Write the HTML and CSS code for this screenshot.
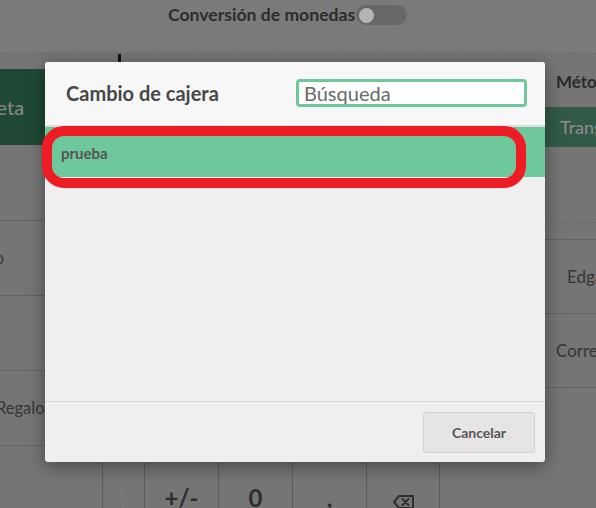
FILE: index.html
```html
<!DOCTYPE html>
<html lang="es">
<head>
<meta charset="utf-8">
<title>Cambio de cajera</title>
<link rel="stylesheet" href="styles.css">
</head>
<body>
<div class="app">
  <header class="topbar">
    <span class="conv">Conversión de monedas</span>
    <span class="toggle"><span class="knob"></span></span>
  </header>
  <main class="main">
    <aside class="methods">
      <div class="method selected"><span class="lbl lbl-tarjeta">Tarjeta</span></div>
      <div class="method"><span class="lbl lbl-banco">Banco</span></div>
      <div class="method"><span class="lbl lbl-efectivo">Efectivo</span></div>
      <div class="method"><span class="lbl lbl-cheque">Cheque</span></div>
      <div class="method"><span class="lbl lbl-regalo">Tarjeta Regalo</span></div>
    </aside>
    <section class="center">
      <div class="cursor"></div>
      <div class="spacer"></div>
      <div class="keypad">
        <div class="kp-edge"></div>
        <div class="kp-gap"></div>
        <div class="kp-cell">+/-</div>
        <div class="kp-cell">0</div>
        <div class="kp-cell">,</div>
        <div class="kp-cell kp-last">
          <svg class="bksp" width="21" height="14" viewBox="0 0 21 14" aria-hidden="true">
            <path d="M6 1 H20 V13 H6 L1 7 Z" fill="none" stroke="#2e2e2e" stroke-width="2" stroke-linejoin="round"/>
            <path d="M9.5 4 L15.5 10 M15.5 4 L9.5 10" stroke="#2e2e2e" stroke-width="2" stroke-linecap="round"/>
          </svg>
        </div>
      </div>
    </section>
    <aside class="side">
      <div class="side-title">Método</div>
      <div class="side-sel">Transferencia</div>
      <div class="side-gap"></div>
      <div class="side-gap2"></div>
      <div class="side-row side-row-a">Edgar</div>
      <div class="side-row side-row-b">Correo</div>
    </aside>
  </main>
</div>

<div class="modal">
  <div class="modal-head">
    <span class="modal-title">Cambio de cajera</span>
    <input class="search" type="text" placeholder="Búsqueda">
  </div>
  <div class="modal-body">
    <div class="cashier selected-row">prueba</div>
  </div>
  <div class="modal-foot">
    <button class="btn-cancel" type="button">Cancelar</button>
  </div>
</div>

<div class="annot"></div>
</body>
</html>
```

FILE: styles.css
```css
* { box-sizing: border-box; }

html, body {
  margin: 0;
  padding: 0;
}

body {
  width: 596px;
  height: 508px;
  overflow: hidden;
  position: relative;
  background: #757575;
  font-family: Lato, "Open Sans", sans-serif;
  color: #2e2e2e;
}

.app {
  height: 508px;
  display: flex;
  flex-direction: column;
}

/* top bar */
.topbar {
  height: 54px;
  flex: 0 0 54px;
  display: flex;
  align-items: flex-start;
  padding-left: 168px;
  padding-top: 3px;
  background: #7a7a7a;
  border-bottom: 1px dashed #6a6a6a;
}

.conv {
  font-size: 17.6px;
  font-weight: 700;
  color: #2c2c2c;
  line-height: 24px;
}

.toggle {
  width: 51px;
  height: 20px;
  border-radius: 10px;
  background: #686868;
  display: flex;
  align-items: center;
  padding-left: 3px;
  margin-top: 2px;
  margin-left: 1px;
}

.knob {
  width: 15px;
  height: 15px;
  border-radius: 50%;
  background: #b4b4b4;
}

/* main */
.main {
  flex: 1;
  display: flex;
  min-height: 0;
}

.methods {
  width: 102px;
  flex: 0 0 102px;
  padding-top: 15px;
  display: flex;
  flex-direction: column;
  overflow: hidden;
}

.method {
  height: 75px;
  flex: 0 0 75px;
  display: flex;
  align-items: center;
  border-bottom: 1px solid #626262;
  white-space: nowrap;
  font-size: 16.5px;
  color: #353535;
}

.method.selected {
  height: 76px;
  flex-basis: 76px;
  background: #1f4936;
  border-bottom: none;
  margin-bottom: 1px;
  color: #8a8a8a;
  font-size: 20px;
}

.lbl-tarjeta { margin-left: -35px; }
.lbl-banco { margin-left: 60px; }
.lbl-efectivo { margin-left: -55px; }
.lbl-cheque { margin-left: 60px; }
.lbl-regalo { margin-left: -57px; }

.center {
  flex: 1;
  display: flex;
  flex-direction: column;
  min-width: 0;
}

.cursor {
  margin-left: 16px;
  width: 3px;
  height: 8px;
  background: #111111;
}

.spacer { flex: 1; }

.keypad {
  height: 62px;
  flex: 0 0 62px;
  display: flex;
  border-left: 1px solid #5c5c5c;
}

.kp-edge {
  width: 20px;
  border-right: 1px dashed #7f7f7f;
}

.kp-gap {
  width: 21px;
}

.kp-cell {
  width: 74px;
  border-left: 1px solid #5c5c5c;
  text-align: center;
  padding-top: 40px;
  font-size: 24px;
  line-height: 24px;
  font-weight: 700;
  color: #2e2e2e;
}

.kp-last {
  border-right: 1px solid #5c5c5c;
  padding-top: 42px;
}

.bksp { display: inline-block; }

/* right side */
.side {
  width: 51px;
  flex: 0 0 51px;
  display: flex;
  flex-direction: column;
  overflow: hidden;
  white-space: nowrap;
}

.side-title {
  height: 53px;
  flex: 0 0 53px;
  display: flex;
  align-items: center;
  padding-left: 11px;
  padding-top: 2px;
  font-size: 17px;
  font-weight: 700;
  color: #2b2b2b;
}

.side-sel {
  height: 40px;
  flex: 0 0 40px;
  display: flex;
  align-items: center;
  padding-left: 15px;
  background: #315b47;
  font-size: 18px;
  color: #8c8c8c;
}

.side-gap {
  height: 76px;
  flex: 0 0 76px;
  border-bottom: 1px dashed #6a6a6a;
}

.side-gap2 {
  height: 17px;
  flex: 0 0 17px;
  border-bottom: 1px solid #626262;
}

.side-row {
  height: 74px;
  flex: 0 0 74px;
  display: flex;
  align-items: center;
  border-bottom: 1px solid #626262;
  font-size: 17px;
  color: #353535;
}

.side-row-a { padding-left: 22px; }
.side-row-b { padding-left: 11px; }

/* modal */
.modal {
  position: absolute;
  left: 45px;
  top: 62px;
  width: 500px;
  height: 400px;
  display: flex;
  flex-direction: column;
  background: #f0eeef;
  border-radius: 3px;
  overflow: hidden;
  box-shadow: 0 4px 18px rgba(0, 0, 0, 0.4);
}

.modal-head {
  height: 65px;
  flex: 0 0 65px;
  display: flex;
  align-items: center;
  justify-content: space-between;
  padding: 0 18px 2px 21px;
  background: #f7f7f7;
  border-bottom: 2px solid #dcdcdc;
}

.modal-title {
  font-size: 20px;
  font-weight: 700;
  color: #474747;
}

.search {
  width: 231px;
  height: 28px;
  border: 3px solid #6fc79c;
  border-radius: 4px;
  background: #ffffff;
  padding: 0 5px;
  font-family: Lato, "Open Sans", sans-serif;
  font-size: 20px;
  color: #555555;
  outline: none;
}

.search::placeholder {
  color: #6a6a6a;
  opacity: 1;
}

.modal-body {
  flex: 1;
  border-bottom: 1px solid #d8d8d8;
}

.cashier {
  height: 50px;
  display: flex;
  align-items: center;
  padding-left: 16px;
  padding-top: 2px;
  font-size: 15px;
  font-weight: 700;
  color: #555555;
}

.selected-row {
  background: #6fc79c;
}

.modal-foot {
  height: 60px;
  flex: 0 0 60px;
  display: flex;
  justify-content: flex-end;
  align-items: flex-start;
  padding: 10px 10px 0 0;
}

.btn-cancel {
  width: 112px;
  height: 41px;
  background: #e6e4e5;
  border: 1px solid #d2d0d1;
  border-radius: 3px;
  font-family: Lato, "Open Sans", sans-serif;
  font-size: 14px;
  font-weight: 700;
  color: #555555;
  padding: 0;
}

/* red annotation */
.annot {
  position: absolute;
  left: 42px;
  top: 126px;
  width: 484px;
  height: 62px;
  border: 10px solid #ee1c24;
  border-radius: 22px;
  pointer-events: none;
}
```
